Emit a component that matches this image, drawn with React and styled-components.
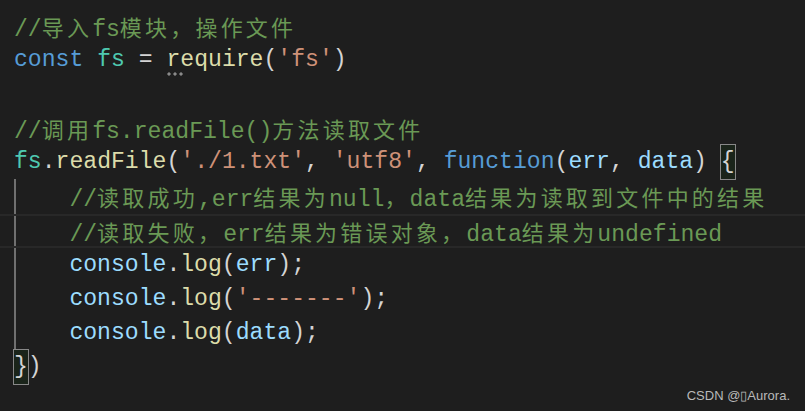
import React from 'react';
import styled, { createGlobalStyle } from 'styled-components';

const Global = createGlobalStyle`
  html, body {
    margin: 0;
    padding: 0;
    background: #1e1e1e;
  }
`;

const Editor = styled.div`
  position: relative;
  width: 805px;
  height: 411px;
  overflow: hidden;
  background: #1e1e1e;
  padding-top: 8.5px;
  box-sizing: border-box;
  font-family: 'Liberation Mono', 'Noto Sans CJK SC', monospace;
  font-size: 23.1px;
  color: #d4d4d4;
`;

const Line = styled.div`
  height: 34.2px;
  line-height: 34.2px;
  padding-left: ${p => (p.$indent ? 69.4 : 14)}px;
  white-space: pre;
  box-sizing: border-box;
  box-shadow: ${p => (p.$active ? 'inset 0 2px #282828, inset 0 -2px #282828' : 'none')};
`;

const Block = styled.div`
  background: linear-gradient(#707070, #707070) 14px 0 / 2px 100% no-repeat;
`;

const T = styled.span`
  color: ${p => p.$c || '#d4d4d4'};
`;

const Cjk = styled.span`
  font-family: 'Noto Sans CJK SC', sans-serif;
  font-size: 22px;
  letter-spacing: 3.2px;
`;

const Match = styled.span`
  outline: 1px solid #888888;
  background: rgba(0, 100, 0, 0.1);
  display: inline-block;
  height: 34px;
  vertical-align: top;
  box-sizing: border-box;
`;

const Hint = styled.span`
  position: relative;
  &::after {
    content: '';
    position: absolute;
    left: 0;
    top: 25px;
    width: 18px;
    height: 4px;
    background: radial-gradient(circle, #8a8a8a 1.4px, transparent 1.8px) 0 0 / 6px 4px repeat-x;
  }
`;

const Watermark = styled.div`
  position: absolute;
  right: 15px;
  bottom: 8px;
  font-family: 'Liberation Sans', Arial, sans-serif;
  font-size: 13px;
  color: #b9b9b9;
`;

const K = '#569cd6';
const V = '#9cdcfe';
const F = '#dcdcaa';
const S = '#ce9178';
const C = '#6a9955';
const N = '#4ec9b0';

const Comment = ({ parts }) => (
  <T $c={C}>
    {parts.map((p, i) => (i % 2 ? <Cjk key={i}>{p}</Cjk> : <React.Fragment key={i}>{p}</React.Fragment>))}
  </T>
);

export default function App() {
  return (
    <>
      <Global />
      <Editor>
        <Line>
          <Comment parts={['//', '导入', 'fs', '模块，操作文件']} />
        </Line>
        <Line>
          <T $c={K}>const</T> <T $c={N}>fs</T> = <T $c={F}><Hint>r</Hint>equire</T>(<T $c={S}>'fs'</T>)
        </Line>
        <Line />
        <Line>
          <Comment parts={['//', '调用', 'fs.readFile()', '方法读取文件']} />
        </Line>
        <Line>
          <T $c={N}>fs</T>.<T $c={F}>readFile</T>(<T $c={S}>'./1.txt'</T>, <T $c={S}>'utf8'</T>, <T $c={K}>function</T>(<T $c={V}>err</T>, <T $c={V}>data</T>) <Match>{'{'}</Match>
        </Line>
        <Block>
          <Line $indent>
            <Comment parts={['//', '读取成功', ',err', '结果为', 'null', '，', 'data', '结果为读取到文件中的结果']} />
          </Line>
          <Line $indent $active>
            <Comment parts={['//', '读取失败，', 'err', '结果为错误对象，', 'data', '结果为', 'undefined']} />
          </Line>
          <Line $indent>
            <T $c={V}>console</T>.<T $c={F}>log</T>(<T $c={V}>err</T>);
          </Line>
          <Line $indent>
            <T $c={V}>console</T>.<T $c={F}>log</T>(<T $c={S}>'-------'</T>);
          </Line>
          <Line $indent>
            <T $c={V}>console</T>.<T $c={F}>log</T>(<T $c={V}>data</T>);
          </Line>
        </Block>
        <Line>
          <Match>{'}'}</Match>)
        </Line>
        <Watermark>CSDN @▯Aurora.</Watermark>
      </Editor>
    </>
  );
}
